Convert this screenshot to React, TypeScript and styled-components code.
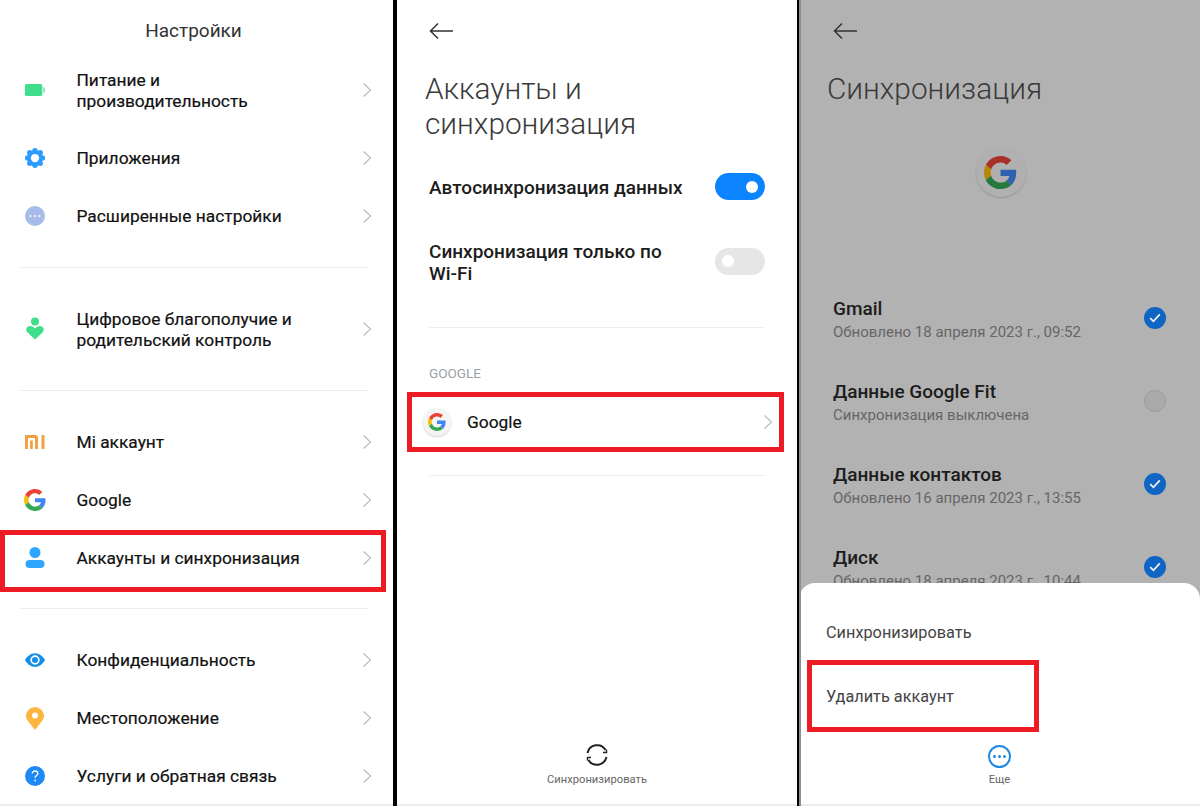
import styled, { createGlobalStyle } from "styled-components";

const GlobalStyle = createGlobalStyle`
  html, body {
    margin: 0;
    padding: 0;
    background: #000;
  }
  *, *::before, *::after {
    box-sizing: border-box;
  }
`;

const GoogleG = ({ size }: { size: number }) => (
  <svg width={size} height={size} viewBox="0 0 48 48">
    <path fill="#ea4335" d="M24 9.500c3.500 0 6.600 1.200 9.100 3.600l6.800-6.800C35.800 2.400 30.300 0 24 0 14.600 0 6.500 5.400 2.600 13.200l7.900 6.200C12.400 13.700 17.700 9.500 24 9.500z" />
    <path fill="#4285f4" d="M46.900 24.500c0-1.600-.1-3.100-.4-4.500H24v9h12.900c-.6 3-2.200 5.500-4.800 7.200l7.700 6c4.500-4.200 7.100-10.300 7.100-17.700z" />
    <path fill="#fbbc05" d="M10.500 28.600c-.5-1.400-.8-3-.8-4.600s.3-3.200.8-4.600l-7.900-6.200C.9 16.500 0 20.100 0 24s.9 7.500 2.600 10.800l7.900-6.200z" />
    <path fill="#34a853" d="M24 48c6.500 0 11.900-2.100 15.900-5.800l-7.700-6c-2.100 1.400-4.900 2.300-8.200 2.300-6.300 0-11.600-4.200-13.500-9.900l-7.900 6.200C6.500 42.600 14.600 48 24 48z" />
  </svg>
);

const Chevron = () => (
  <svg width="10" height="16" viewBox="0 0 10 16" fill="none">
    <path d="M1.500 1.500 8.500 8l-7 6.500" stroke="#bcbcbc" strokeWidth="1.200" />
  </svg>
);

const BackArrow = () => (
  <svg width="24" height="18" viewBox="0 0 24 18" fill="none">
    <path d="M24 9H1.500M9 1.500 1.500 9 9 16.500" stroke="#333" strokeWidth="1.500" />
  </svg>
);

const BatteryIcon = () => (
  <svg width="24" height="16" viewBox="0 0 24 16">
    <rect x="1" y="1.500" width="19" height="13" rx="2" fill="#3fde8a" />
    <rect x="21" y="5" width="1.800" height="6" rx="0.800" fill="#7fe6b0" />
  </svg>
);

const AppsIcon = () => (
  <svg width="24" height="24" viewBox="0 0 24 24" fill="#2e9bff">
    <circle cx="12" cy="12" r="8.500" />
    {[0, 45, 90, 135, 180, 225, 270, 315].map((angle) => (
      <circle
        key={angle}
        cx={12 + 8 * Math.cos((angle * Math.PI) / 180)}
        cy={12 + 8 * Math.sin((angle * Math.PI) / 180)}
        r="3"
      />
    ))}
    <circle cx="12" cy="12" r="4.500" fill="#fff" />
  </svg>
);

const MoreIcon = () => (
  <svg width="22" height="22" viewBox="0 0 22 22">
    <circle cx="11" cy="11" r="10" fill="#a7bbea" />
    <circle cx="6.500" cy="11" r="1.100" fill="#fff" />
    <circle cx="11" cy="11" r="1.100" fill="#fff" />
    <circle cx="15.500" cy="11" r="1.100" fill="#fff" />
  </svg>
);

const WellbeingIcon = () => (
  <svg width="22" height="26" viewBox="0 0 22 26">
    <circle cx="11" cy="5.500" r="4" fill="#3fde8a" />
    <path fill="#3fde8a" d="M11 23.500 3.500 16.500C1 14 2.500 10 6 10c2 0 3.800 1 5 2.500C12.200 11 14 10 16 10c3.500 0 5 4 2.500 6.500z" />
  </svg>
);

const MiIcon = () => (
  <svg width="22" height="16" viewBox="0 0 22 16" fill="#f0a245">
    <path d="M1 1h10.500C13 1 14 2 14 3.500V15h-3V5c0-.6-.4-1-1-1H4v11H1z" />
    <rect x="6" y="6.500" width="2.800" height="8.500" />
    <rect x="17.500" y="1" width="3" height="14" />
  </svg>
);

const PersonIcon = () => (
  <svg width="22" height="24" viewBox="0 0 22 24" fill="#2ea6ff">
    <circle cx="11" cy="6.500" r="5.500" />
    <rect x="1.500" y="14" width="19" height="8" rx="4" />
  </svg>
);

const EyeIcon = () => (
  <svg width="24" height="18" viewBox="0 0 24 18">
    <path fill="#148fe8" d="M1 9c2.500-4.500 6.500-7.500 11-7.500S20.500 4.500 23 9c-2.500 4.500-6.500 7.500-11 7.500S3.500 13.500 1 9z" />
    <circle cx="12" cy="9" r="4.200" fill="none" stroke="#fff" strokeWidth="1.800" />
  </svg>
);

const PinIcon = () => (
  <svg width="20" height="25" viewBox="0 0 20 25">
    <path fill="#fbb540" d="M10 24 3 15C1.500 13 1 11.500 1 10a9 9 0 0 1 18 0c0 1.500-.5 3-2 5z" />
    <circle cx="10" cy="9.500" r="3" fill="#fff" />
  </svg>
);

const HelpIcon = () => (
  <svg width="22" height="22" viewBox="0 0 22 22">
    <circle cx="11" cy="11" r="10" fill="#1e88f5" />
    <path d="M8.300 8.600c0-1.600 1.200-2.600 2.800-2.600s2.700 1 2.700 2.400c0 2-2.600 2.100-2.700 4.300" fill="none" stroke="#fff" strokeWidth="1.400" />
    <circle cx="11.100" cy="15.500" r="0.900" fill="#fff" />
  </svg>
);

const SyncIcon = () => (
  <svg width="26" height="26" viewBox="0 0 26 26" fill="none" stroke="#222" strokeWidth="2">
    <path d="M3.500 11A9.800 9.800 0 0 1 21.500 8" />
    <path d="M22.500 15A9.800 9.800 0 0 1 4.500 18" />
    <path d="M19 10.500h3.500V7.500M7 15.500H3.500v3" strokeWidth="1.400" />
  </svg>
);

const CheckIcon = () => (
  <svg width="12" height="10" viewBox="0 0 12 10" fill="none">
    <path d="M1.200 5.200 4.400 8.300l6.400-7" stroke="#f0f0f0" strokeWidth="1.800" />
  </svg>
);

const Page = styled.div`
  display: flex;
  width: 1200px;
  height: 806px;
  overflow: hidden;
  background: #000;
  font-family: Roboto, "Noto Sans", sans-serif;
`;

const Screen = styled.section`
  position: relative;
  display: flex;
  flex-direction: column;
  height: 806px;
  background: #fff;
  border-bottom: 2px solid #ececec;
`;

const SettingsScreen = styled(Screen)`
  width: 393px;
  margin-right: 4px;
`;

const AccountsScreen = styled(Screen)`
  width: 400px;
  margin-right: 2px;
  padding: 0 32px;
`;

const SyncScreen = styled(Screen)`
  width: 401px;
  padding: 0 34px 0 32px;
  background: #b2b2b2;
  border-bottom: 0;
  border-left: 2px solid #8e8e8e;
  overflow: hidden;
`;

const ScreenTitle = styled.h1`
  display: flex;
  flex: none;
  align-items: center;
  justify-content: center;
  height: 51px;
  margin: 0;
  padding: 9px 6px 0 0;
  font-size: 19px;
  font-weight: 400;
  color: #333;
`;

const Row = styled.div<{ $tall?: boolean; $boxed?: boolean }>`
  position: relative;
  display: flex;
  flex: none;
  align-items: center;
  height: ${(p) => (p.$tall ? "78px" : "58px")};
  padding: 0 21px 0 24px;

  ${(p) =>
    p.$boxed &&
    `&::after {
      content: "";
      position: absolute;
      top: 1px;
      left: 0;
      right: 7px;
      bottom: -5px;
      border: 5px solid #ed1c24;
    }`}
`;

const IconSlot = styled.div`
  display: flex;
  flex: none;
  align-items: center;
  justify-content: center;
  width: 22px;
  margin-right: 30.500px;
`;

const RowLabel = styled.div`
  flex: 1;
  padding-top: 1px;
  font-size: 17.350px;
  line-height: 20.500px;
  font-weight: 400;
  color: #111;
  -webkit-text-stroke: 0.2px #111;
  white-space: pre-line;
`;

const Divider = styled.hr<{ $above?: number }>`
  flex: none;
  height: 1px;
  margin: ${(p) => p.$above ?? 22}px 24px 22px 20px;
  border: 0;
  background: #eeeeee;
`;

const BackButton = styled.div`
  display: flex;
  flex: none;
  align-items: center;
  height: 18px;
  margin-top: 22px;
`;

const LargeTitle = styled.h2<{ $shift: number }>`
  flex: none;
  margin: 31px 0 0 ${(p) => p.$shift}px;
  font-size: 29.800px;
  line-height: 35px;
  font-weight: 300;
  color: #3a3a3a;
`;

const ToggleRow = styled.div<{ $height: number }>`
  display: flex;
  flex: none;
  align-items: center;
  justify-content: space-between;
  height: ${(p) => p.$height}px;
`;

const ToggleGroup = styled.div`
  display: flex;
  flex: none;
  flex-direction: column;
  margin: 11px 0 26px;
`;

const ToggleLabel = styled.div`
  width: 280px;
  padding-top: 3px;
  font-size: 19px;
  line-height: 22px;
  font-weight: 500;
  color: #1c1c1c;
  white-space: pre-line;
`;

const Toggle = styled.div<{ $on: boolean }>`
  display: flex;
  flex: none;
  align-items: center;
  justify-content: ${(p) => (p.$on ? "flex-end" : "flex-start")};
  width: 50px;
  height: 27px;
  padding: 0 7px;
  border-radius: 14px;
  background: ${(p) => (p.$on ? "#0d84ff" : "#e6e6e6")};

  &::before {
    content: "";
    width: 12px;
    height: 12px;
    border-radius: 50%;
    background: #fff;
  }
`;

const SectionLine = styled.hr`
  flex: none;
  height: 1px;
  margin: 0;
  border: 0;
  background: #eeeeee;
`;

const SectionLabel = styled.div`
  flex: none;
  margin-top: 37px;
  font-size: 13.500px;
  line-height: 16px;
  color: #9a9fa8;
`;

const GoogleRow = styled.div`
  position: relative;
  display: flex;
  flex: none;
  align-items: center;
  height: 50px;
  margin: 16px -8px 28px -6px;

  &::after {
    content: "";
    position: absolute;
    top: -5px;
    left: -16px;
    right: -11px;
    bottom: -5px;
    border: 5px solid #ed1c24;
  }
`;

const GoogleBadge = styled.div<{ $size: number; $dim?: boolean }>`
  display: flex;
  flex: none;
  align-items: center;
  justify-content: center;
  width: ${(p) => p.$size}px;
  height: ${(p) => p.$size}px;
  border-radius: 50%;
  background: #f4f4f4;
  box-shadow: 0 1px 2px rgba(0, 0, 0, 0.18);
  filter: ${(p) => (p.$dim ? "brightness(0.72)" : "none")};
`;

const GoogleName = styled.div`
  flex: 1;
  margin-left: 16px;
  font-size: 17.350px;
  font-weight: 400;
  color: #111;
  -webkit-text-stroke: 0.2px #111;
`;

const ChevronSlot = styled.div`
  display: flex;
  flex: none;
`;

const BottomAction = styled.div`
  display: flex;
  flex-direction: column;
  align-items: center;
  gap: 5px;
  margin-top: auto;
  margin-bottom: 18px;
`;

const ActionLabel = styled.div`
  font-size: 11.200px;
  line-height: 13px;
  color: #666;
`;

const CenteredBadge = styled.div`
  display: flex;
  flex: none;
  justify-content: center;
  margin: 41px -2px 0 0;
`;

const SyncList = styled.div`
  display: flex;
  flex: none;
  flex-direction: column;
  margin-top: 81px;
`;

const SyncItem = styled.div`
  display: flex;
  flex: none;
  align-items: center;
  justify-content: space-between;
  height: 83px;
`;

const SyncTitle = styled.div`
  font-size: 19px;
  line-height: 24px;
  font-weight: 500;
  color: #1c1c1c;
`;

const SyncStatus = styled.div`
  font-size: 15px;
  line-height: 22px;
  color: #666;
`;

const CheckMark = styled.div<{ $on: boolean }>`
  display: flex;
  flex: none;
  align-items: center;
  justify-content: center;
  width: 22px;
  height: 22px;
  margin-bottom: 4px;
  border-radius: 50%;
  background: ${(p) => (p.$on ? "#0e65c4" : "#aaaaaa")};
  border: ${(p) => (p.$on ? "0" : "1px solid #9c9c9c")};
`;

const Sheet = styled.div`
  position: absolute;
  left: -2px;
  right: 0;
  bottom: 0;
  display: flex;
  flex-direction: column;
  height: 223px;
  padding-top: 17px;
  border-radius: 16px 16px 0 0;
  background: #fff;
  border-bottom: 2px solid #ececec;
`;

const SheetItem = styled.div<{ $boxed?: boolean }>`
  position: relative;
  display: flex;
  flex: none;
  align-items: center;
  height: 64px;
  padding-left: 27px;
  font-size: 16.300px;
  color: #444;

  ${(p) =>
    p.$boxed &&
    `&::after {
      content: "";
      position: absolute;
      top: -4px;
      left: 8px;
      width: 232px;
      height: 72px;
      border: 5px solid #ed1c24;
    }`}
`;

const MoreCircle = styled.div`
  display: flex;
  align-items: center;
  justify-content: center;
  gap: 2px;
  width: 23px;
  height: 23px;
  border: 2px solid #1e88e5;
  border-radius: 50%;
`;

const MoreDot = styled.span`
  width: 3px;
  height: 3px;
  border-radius: 50%;
  background: #1e88e5;
`;

const settingsTop = [
  { icon: <BatteryIcon />, label: "Питание и\nпроизводительность", tall: true },
  { icon: <AppsIcon />, label: "Приложения" },
  { icon: <MoreIcon />, label: "Расширенные настройки" },
];

const accountRows = [
  { icon: <MiIcon />, label: "Mi аккаунт" },
  { icon: <GoogleG size={22} />, label: "Google" },
  { icon: <PersonIcon />, label: "Аккаунты и синхронизация", boxed: true },
];

const settingsBottom = [
  { icon: <EyeIcon />, label: "Конфиденциальность" },
  { icon: <PinIcon />, label: "Местоположение" },
  { icon: <HelpIcon />, label: "Услуги и обратная связь" },
];

const syncItems = [
  { title: "Gmail", status: "Обновлено 18 апреля 2023 г., 09:52", on: true },
  { title: "Данные Google Fit", status: "Синхронизация выключена", on: false },
  { title: "Данные контактов", status: "Обновлено 16 апреля 2023 г., 13:55", on: true },
  { title: "Диск", status: "Обновлено 18 апреля 2023 г., 10:44", on: true },
];

type SettingsRow = { icon: React.ReactNode; label: string; tall?: boolean; boxed?: boolean };

const renderRow = (row: SettingsRow) => (
  <Row key={row.label} $tall={row.tall} $boxed={row.boxed}>
    <IconSlot>{row.icon}</IconSlot>
    <RowLabel>{row.label}</RowLabel>
    <ChevronSlot>
      <Chevron />
    </ChevronSlot>
  </Row>
);

export default function App() {
  return (
    <Page>
      <GlobalStyle />
      <SettingsScreen>
        <ScreenTitle>Настройки</ScreenTitle>
        {settingsTop.map(renderRow)}
        <Divider />
        {renderRow({
          icon: <WellbeingIcon />,
          label: "Цифровое благополучие и\nродительский контроль",
          tall: true,
        })}
        <Divider />
        {accountRows.map(renderRow)}
        <Divider $above={21} />
        {settingsBottom.map(renderRow)}
      </SettingsScreen>

      <AccountsScreen>
        <BackButton>
          <BackArrow />
        </BackButton>
        <LargeTitle $shift={-4}>
          Аккаунты и
          <br />
          синхронизация
        </LargeTitle>
        <ToggleGroup>
          <ToggleRow $height={69}>
            <ToggleLabel>Автосинхронизация данных</ToggleLabel>
            <Toggle $on />
          </ToggleRow>
          <ToggleRow $height={80}>
            <ToggleLabel>{"Синхронизация только по\nWi-Fi"}</ToggleLabel>
            <Toggle $on={false} />
          </ToggleRow>
        </ToggleGroup>
        <SectionLine />
        <SectionLabel>GOOGLE</SectionLabel>
        <GoogleRow>
          <GoogleBadge $size={28}>
            <GoogleG size={18} />
          </GoogleBadge>
          <GoogleName>Google</GoogleName>
          <ChevronSlot>
            <Chevron />
          </ChevronSlot>
        </GoogleRow>
        <SectionLine />
        <BottomAction>
          <SyncIcon />
          <ActionLabel>Синхронизировать</ActionLabel>
        </BottomAction>
      </AccountsScreen>

      <SyncScreen>
        <BackButton>
          <BackArrow />
        </BackButton>
        <LargeTitle $shift={-6}>Синхронизация</LargeTitle>
        <CenteredBadge>
          <GoogleBadge $size={50} $dim>
            <GoogleG size={33} />
          </GoogleBadge>
        </CenteredBadge>
        <SyncList>
          {syncItems.map((item) => (
            <SyncItem key={item.title}>
              <div>
                <SyncTitle>{item.title}</SyncTitle>
                <SyncStatus>{item.status}</SyncStatus>
              </div>
              <CheckMark $on={item.on}>{item.on && <CheckIcon />}</CheckMark>
            </SyncItem>
          ))}
        </SyncList>
        <Sheet>
          <SheetItem>Синхронизировать</SheetItem>
          <SheetItem $boxed>Удалить аккаунт</SheetItem>
          <BottomAction>
            <MoreCircle>
              <MoreDot />
              <MoreDot />
              <MoreDot />
            </MoreCircle>
            <ActionLabel>Еще</ActionLabel>
          </BottomAction>
        </Sheet>
      </SyncScreen>
    </Page>
  );
}
